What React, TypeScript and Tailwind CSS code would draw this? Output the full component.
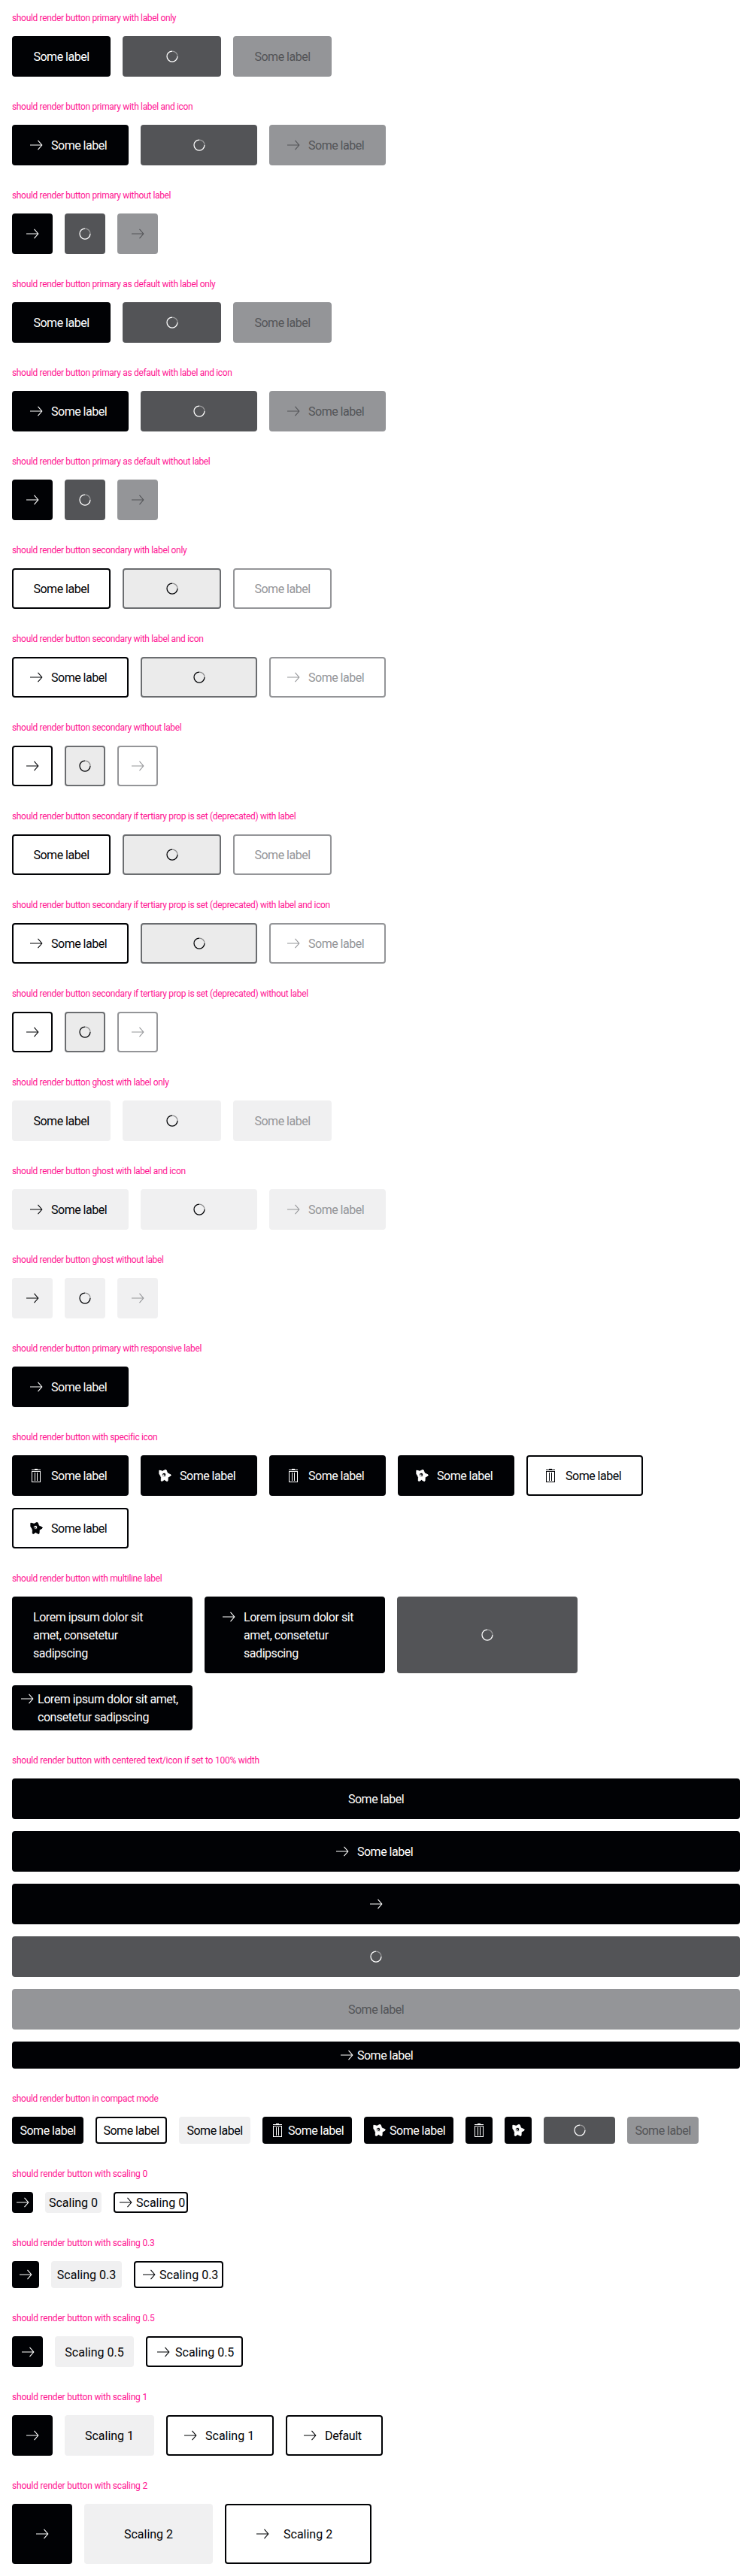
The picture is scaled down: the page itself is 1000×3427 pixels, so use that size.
import React from "react";

type Variant = "primary" | "secondary" | "ghost";
type State = "normal" | "loading" | "disabled";
type IconName = "arrow" | "trash" | "star";
type Size = "s0" | "s3" | "compact" | "s5" | "s1" | "s2";

const colors: Record<Variant, Record<State, string>> = {
  primary: {
    normal: "bg-[#010205] border-[#010205] text-white",
    loading: "bg-[#535457] border-[#535457] text-white",
    disabled: "bg-[#949598] border-[#949598] text-[#535457]",
  },
  secondary: {
    normal: "bg-white border-[#010205] text-[#010205]",
    loading: "bg-[#ebebeb] border-[#6b6d70] text-[#010205]",
    disabled: "bg-white border-[#949598] text-[#949598]",
  },
  ghost: {
    normal: "bg-[#f0f0f1] border-[#f0f0f1] text-[#010205]",
    loading: "bg-[#f0f0f1] border-[#f0f0f1] text-[#010205]",
    disabled: "bg-[#f0f0f1] border-[#f0f0f1] text-[#949598]",
  },
};

const sizes: Record<Size, { pad: string; square: string; gap: string; lead: string }> = {
  s0: { pad: "py-0", square: "w-7", gap: "gap-[2px]", lead: "pl-[2px]" },
  s3: { pad: "py-1", square: "w-9", gap: "gap-[2px]", lead: "pl-[6px]" },
  compact: { pad: "py-1", square: "w-9", gap: "gap-[2px]", lead: "pl-[6px]" },
  s5: { pad: "py-[6.5px]", square: "w-[41px]", gap: "gap-1", lead: "pl-[9px]" },
  s1: { pad: "py-[13px]", square: "w-[54px]", gap: "gap-2", lead: "pl-[18px]" },
  s2: { pad: "py-[26px]", square: "w-20", gap: "gap-4", lead: "pl-[36px]" },
};

function Icon({ name }: { name: IconName }) {
  if (name === "arrow")
    return (
      <svg viewBox="0 0 24 24" className="size-6 shrink-0" fill="none" stroke="currentColor" strokeWidth="1.1">
        <path d="M4 12h15.5M14.5 5.8l5.3 6.2-5.3 6.2" />
      </svg>
    );
  if (name === "trash")
    return (
      <svg viewBox="0 0 24 24" className="size-6 shrink-0" fill="currentColor">
        <path d="M10 3h4v1h4v1H6V4h4zM6 6h12v15H6zm1 1v13h10V7zM10 8h1v11h-1zM13 8h1v11h-1z" fillRule="evenodd" />
      </svg>
    );
  return (
    <svg viewBox="0 0 24 24" className="size-6 shrink-0" fill="currentColor">
      <path
        fillRule="evenodd"
        stroke="currentColor"
        strokeWidth="1"
        strokeLinejoin="round"
        d="M4.900 5.200L9.300 6.300 12.600 4.600 14.100 4.800 15.600 8.800 20.200 11 20.100 12 16.200 14.400 16 19.100 14.900 19.400 11.500 17.500 8.400 19.400 7.300 19 7.400 14.500 6.500 12.300 4.900 9.800zM11.200 8.300a2.600 2.600 0 1 0 0 5.200 2.600 2.600 0 0 0 0-5.200z"
      />
      <circle cx="10.600" cy="11.600" r="1.100" />
    </svg>
  );
}

function Spinner() {
  return (
    <svg viewBox="0 0 24 24" className="size-6 shrink-0" fill="none" stroke="currentColor" strokeWidth="1.25">
      <path d="M12 5a7 7 0 0 1 7 7" opacity="0.4" />
      <path d="M12 5a7 7 0 1 0 7 7" />
    </svg>
  );
}

interface ButtonProps {
  v?: Variant;
  state?: State;
  icon?: IconName;
  label?: string;
  size?: Size;
  w?: string;
  center?: boolean;
  top?: boolean;
  tracking?: string;
}

function Button({
  v = "primary",
  state = "normal",
  icon,
  label,
  size = "s1",
  w,
  center,
  top,
  tracking = "tracking-[-0.5px]",
}: ButtonProps) {
  const s = sizes[size];
  const width = w ?? (label ? (icon ? "w-[155px]" : "w-[131px]") : s.square);
  const lead = state !== "loading" && icon && label && !center;
  return (
    <button
      type="button"
      className={`flex rounded border-2 ${top ? "items-start" : "items-center"} ${colors[v][state]} ${s.pad} ${s.gap} ${width} ${
        lead ? s.lead : "justify-center"
      }`}
    >
      {state === "loading" ? (
        <Spinner />
      ) : (
        <>
          {icon && <Icon name={icon} />}
          {label && (
            <span className={`-mb-px whitespace-pre pt-px text-left text-base leading-6 ${tracking}`}>{label}</span>
          )}
        </>
      )}
    </button>
  );
}

function Section({
  title,
  tracking = "tracking-[-0.34px]",
  children,
}: {
  title: string;
  tracking?: string;
  children: React.ReactNode;
}) {
  return (
    <section>
      <h2 className={`mb-4 h-4 whitespace-nowrap text-xs leading-4 text-[#ff1493] ${tracking}`}>{title}</h2>
      <div className="flex flex-wrap gap-4">{children}</div>
    </section>
  );
}

const states: State[] = ["normal", "loading", "disabled"];
const kinds: { label?: string; icon?: IconName }[] = [
  { label: "Some label" },
  { label: "Some label", icon: "arrow" },
  { icon: "arrow" },
];

const groups: { v: Variant; titles: string[] }[] = [
  {
    v: "primary",
    titles: [
      "should render button primary with label only",
      "should render button primary with label and icon",
      "should render button primary without label",
    ],
  },
  {
    v: "primary",
    titles: [
      "should render button primary as default with label only",
      "should render button primary as default with label and icon",
      "should render button primary as default without label",
    ],
  },
  {
    v: "secondary",
    titles: [
      "should render button secondary with label only",
      "should render button secondary with label and icon",
      "should render button secondary without label",
    ],
  },
  {
    v: "secondary",
    titles: [
      "should render button secondary if tertiary prop is set (deprecated) with label",
      "should render button secondary if tertiary prop is set (deprecated) with label and icon",
      "should render button secondary if tertiary prop is set (deprecated) without label",
    ],
  },
  {
    v: "ghost",
    titles: [
      "should render button ghost with label only",
      "should render button ghost with label and icon",
      "should render button ghost without label",
    ],
  },
];

const L = "Some label";
const LOREM = "Lorem ipsum dolor sit\namet, consetetur\nsadipscing";
const NORMAL = "tracking-[0px]";
const NUMERIC = "tracking-[-0.2px]";

export default function App() {
  return (
    <main className="flex flex-col gap-8 bg-white p-4 font-['Roboto',sans-serif]">
      {groups.flatMap((g) =>
        g.titles.map((title, i) => (
          <Section key={title} title={title}>
            {states.map((st) => (
              <Button key={st} v={g.v} state={st} {...kinds[i]} />
            ))}
          </Section>
        )),
      )}
      <Section title="should render button primary with responsive label">
        <Button icon="arrow" label={L} />
      </Section>
      <Section title="should render button with specific icon">
        <Button icon="trash" label={L} />
        <Button icon="star" label={L} />
        <Button icon="trash" label={L} />
        <Button icon="star" label={L} />
        <Button v="secondary" icon="trash" label={L} />
        <Button v="secondary" icon="star" label={L} />
      </Section>
      <Section title="should render button with multiline label">
        <div className="flex gap-4">
          <button type="button" className="flex w-60 rounded border-2 border-[#010205] bg-[#010205] py-[13px] pl-[26px] text-white">
            <span className="-mb-px whitespace-pre pt-px text-left text-base leading-6 tracking-[-0.45px]">{LOREM}</span>
          </button>
          <Button icon="arrow" label={LOREM} w="w-60" top tracking="tracking-[-0.45px]" />
          <Button state="loading" w="w-60" />
        </div>
        <div className="flex w-full">
          <button type="button" className="flex w-60 items-start gap-[2px] rounded border-2 border-[#010205] bg-[#010205] py-1 pl-[6px] text-white">
            <Icon name="arrow" />
            <span className="-mb-px whitespace-pre pt-px text-left text-base leading-6 tracking-[-0.45px]">
              {"Lorem ipsum dolor sit amet,\nconsetetur sadipscing"}
            </span>
          </button>
        </div>
      </Section>
      <Section
        title="should render button with centered text/icon if set to 100% width"
        tracking="tracking-[-0.23px]"
      >
        <Button label={L} w="w-full" />
        <Button icon="arrow" label={L} w="w-full pr-2" center />
        <Button icon="arrow" w="w-full" />
        <Button state="loading" w="w-full" />
        <Button state="disabled" label={L} w="w-full" />
        <Button icon="arrow" label={L} w="w-full pr-[2px]" size="compact" center />
      </Section>
      <Section title="should render button in compact mode">
        <Button size="compact" label={L} w="w-[95px]" />
        <Button size="compact" v="secondary" label={L} w="w-[95px]" />
        <Button size="compact" v="ghost" label={L} w="w-[95px]" />
        <Button size="compact" icon="trash" label={L} w="w-[119px]" />
        <Button size="compact" icon="star" label={L} w="w-[119px]" />
        <Button size="compact" icon="trash" />
        <Button size="compact" icon="star" />
        <Button size="compact" state="loading" w="w-[95px]" />
        <Button size="compact" state="disabled" label={L} w="w-[95px]" />
      </Section>
      <Section title="should render button with scaling 0" tracking={NUMERIC}>
        <Button size="s0" icon="arrow" />
        <Button size="s0" v="ghost" label="Scaling 0" w="w-[75px]" tracking={NORMAL} />
        <Button size="s0" v="secondary" icon="arrow" label="Scaling 0" w="w-[99px]" tracking={NORMAL} />
      </Section>
      <Section title="should render button with scaling 0.3" tracking={NUMERIC}>
        <Button size="s3" icon="arrow" />
        <Button size="s3" v="ghost" label="Scaling 0.3" w="w-[94px]" tracking={NORMAL} />
        <Button size="s3" v="secondary" icon="arrow" label="Scaling 0.3" w="w-[119px]" tracking={NORMAL} />
      </Section>
      <Section title="should render button with scaling 0.5" tracking={NUMERIC}>
        <Button size="s5" icon="arrow" />
        <Button size="s5" v="ghost" label="Scaling 0.5" w="w-[105px]" tracking={NORMAL} />
        <Button size="s5" v="secondary" icon="arrow" label="Scaling 0.5" w="w-[129px]" tracking={NORMAL} />
      </Section>
      <Section title="should render button with scaling 1" tracking={NUMERIC}>
        <Button icon="arrow" />
        <Button v="ghost" label="Scaling 1" w="w-[119px]" tracking={NORMAL} />
        <Button v="secondary" icon="arrow" label="Scaling 1" w="w-[143px]" tracking={NORMAL} />
        <Button v="secondary" icon="arrow" label="Default" w="w-[129px]" tracking="tracking-[-0.35px]" />
      </Section>
      <Section title="should render button with scaling 2" tracking={NUMERIC}>
        <Button size="s2" icon="arrow" />
        <Button size="s2" v="ghost" label="Scaling 2" w="w-[171px]" tracking={NORMAL} />
        <Button size="s2" v="secondary" icon="arrow" label="Scaling 2" w="w-[195px]" tracking={NORMAL} />
      </Section>
    </main>
  );
}
